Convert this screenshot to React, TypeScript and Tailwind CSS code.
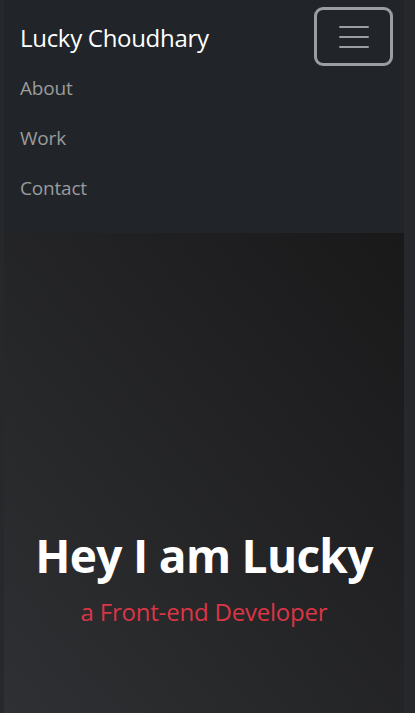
export default function App() {
  const links = ["About", "Work", "Contact"];

  return (
    <div
      className="min-h-[713px] bg-[#27282b] pl-[4px] pr-[11px] flex flex-col"
      style={{ fontFamily: '"Open Sans", "Noto Sans", sans-serif' }}
    >
      {/* Navbar, expanded */}
      <nav className="bg-[#212529] pl-[16px] pr-[11px] pt-[7px] pb-[20px]">
        <div className="flex items-start justify-between">
          <a className="text-white text-[24px] leading-none pt-[19px] tracking-[-0.3px]">
            Lucky Choudhary
          </a>
          <button className="w-[79px] h-[59px] border-[3px] border-[#9c9da0] rounded-[9px] flex items-center justify-center">
            <svg width="30" height="24" viewBox="0 0 30 24">
              <path
                d="M1 2h28M1 12h28M1 22h28"
                stroke="#9c9da0"
                strokeWidth="2"
                strokeLinecap="round"
              />
            </svg>
          </button>
        </div>
        <ul className="-mt-[3px] flex flex-col">
          {links.map((l) => (
            <li key={l} className="h-[50px] flex items-center">
              <a className="text-[#9a9b9d] text-[19px] tracking-[-0.2px]">{l}</a>
            </li>
          ))}
        </ul>
      </nav>

      {/* Hero */}
      <section className="flex-1 h-[479px] bg-gradient-to-tr from-[#2f3033] to-[#19191a] flex flex-col items-center justify-end pb-[83px]">
        <h1 className="text-white font-bold text-[46px] leading-tight tracking-[-0.7px]">
          Hey I am Lucky
        </h1>
        <p className="text-[#dc3545] text-[24px] mt-[10px] tracking-[-0.2px]">
          a Front-end Developer
        </p>
      </section>
    </div>
  );
}
